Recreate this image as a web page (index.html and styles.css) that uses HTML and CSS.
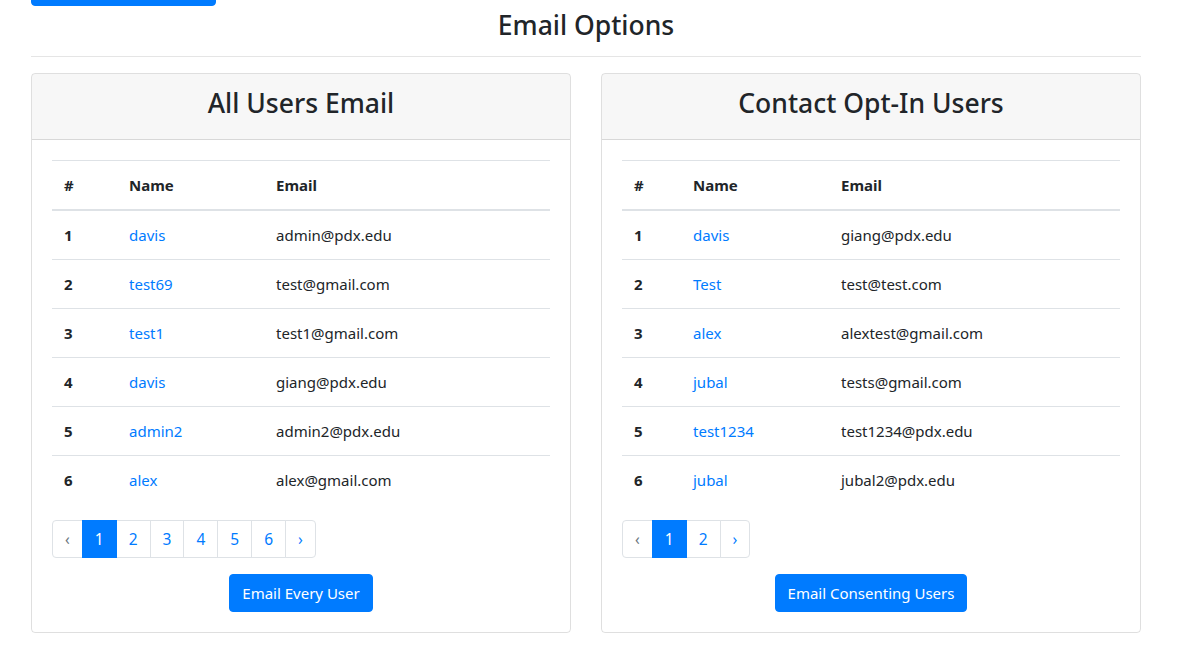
FILE: index.html
```html
<!DOCTYPE html>
<html>
<head>
<meta charset="utf-8">
<link rel="stylesheet" href="styles.css">
</head>
<body>
<div class="page">
  <div class="top-row"><button class="btn btn-top" aria-label="Back"></button></div>
  <h3 class="page-title">Email Options</h3>
  <hr class="divider">
  <div class="cards">
    <div class="card">
      <div class="card-header"><h3 class="card-title">All Users Email</h3></div>
      <div class="card-body">
        <table class="table t-left">
          <colgroup><col class="c1"><col class="c2"><col></colgroup>
          <thead><tr><th>#</th><th>Name</th><th>Email</th></tr></thead>
          <tbody>
            <tr><th>1</th><td><a href="#">davis</a></td><td>admin@pdx.edu</td></tr>
            <tr><th>2</th><td><a href="#">test69</a></td><td>test@gmail.com</td></tr>
            <tr><th>3</th><td><a href="#">test1</a></td><td>test1@gmail.com</td></tr>
            <tr><th>4</th><td><a href="#">davis</a></td><td>giang@pdx.edu</td></tr>
            <tr><th>5</th><td><a href="#">admin2</a></td><td>admin2@pdx.edu</td></tr>
            <tr><th>6</th><td><a href="#">alex</a></td><td>alex@gmail.com</td></tr>
          </tbody>
        </table>
        <ul class="pagination">
          <li class="page-item disabled"><span class="page-link arrow">‹</span></li>
          <li class="page-item active"><span class="page-link">1</span></li>
          <li class="page-item"><a class="page-link" href="#">2</a></li>
          <li class="page-item"><a class="page-link" href="#">3</a></li>
          <li class="page-item"><a class="page-link" href="#">4</a></li>
          <li class="page-item"><a class="page-link" href="#">5</a></li>
          <li class="page-item"><a class="page-link" href="#">6</a></li>
          <li class="page-item"><a class="page-link arrow" href="#">›</a></li>
        </ul>
        <div class="actions"><button class="btn">Email Every User</button></div>
      </div>
    </div>
    <div class="card">
      <div class="card-header"><h3 class="card-title">Contact Opt-In Users</h3></div>
      <div class="card-body">
        <table class="table t-right">
          <colgroup><col class="c1"><col class="c2"><col></colgroup>
          <thead><tr><th>#</th><th>Name</th><th>Email</th></tr></thead>
          <tbody>
            <tr><th>1</th><td><a href="#">davis</a></td><td>giang@pdx.edu</td></tr>
            <tr><th>2</th><td><a href="#">Test</a></td><td>test@test.com</td></tr>
            <tr><th>3</th><td><a href="#">alex</a></td><td>alextest@gmail.com</td></tr>
            <tr><th>4</th><td><a href="#">jubal</a></td><td>tests@gmail.com</td></tr>
            <tr><th>5</th><td><a href="#">test1234</a></td><td>test1234@pdx.edu</td></tr>
            <tr><th>6</th><td><a href="#">jubal</a></td><td>jubal2@pdx.edu</td></tr>
          </tbody>
        </table>
        <ul class="pagination">
          <li class="page-item disabled"><span class="page-link arrow">‹</span></li>
          <li class="page-item active"><span class="page-link">1</span></li>
          <li class="page-item"><a class="page-link" href="#">2</a></li>
          <li class="page-item"><a class="page-link arrow" href="#">›</a></li>
        </ul>
        <div class="actions"><button class="btn">Email Consenting Users</button></div>
      </div>
    </div>
  </div>
</div>
</body>
</html>
```
FILE: styles.css
```css
* { box-sizing: border-box; }
html, body { margin: 0; padding: 0; background: #fff; }
body {
  font-family: "Noto Sans", "Open Sans", sans-serif;
  font-size: 15px;
  line-height: 24px;
  color: #212529;
}
.page {
  width: 1110px;
  margin-left: 31px;
}
.top-row { height: 6px; overflow: hidden; }
.btn {
  display: inline-block;
  font-family: inherit;
  font-size: 15px;
  line-height: 24px;
  color: #fff;
  background: #007bff;
  border: 1px solid #007bff;
  border-radius: 4px;
  padding: 6px 12px;
  cursor: pointer;
}
.btn-top {
  display: block;
  width: 185px;
  height: 38px;
  margin-top: -32px;
}
.page-title {
  margin: 3px 0 0;
  font-size: 26.5px;
  font-weight: 500;
  line-height: 33.6px;
  text-align: center;
}
.divider {
  margin: 13px 0 16px;
  border: 0;
  border-top: 1px solid rgba(0,0,0,.1);
}
.cards {
  display: grid;
  grid-template-columns: 540px 540px;
  column-gap: 30px;
}
.card {
  border: 1px solid rgba(0,0,0,.125);
  border-radius: 4px;
  overflow: hidden;
}
.card-header {
  background: rgba(0,0,0,.03);
  border-bottom: 1px solid rgba(0,0,0,.125);
  padding: 13px 20px 11px;
  text-align: center;
}
.card-title {
  margin: 0 0 8px;
  font-size: 26.5px;
  font-weight: 500;
  line-height: 33.6px;
}
.card-body { padding: 20px; }
.table {
  width: 100%;
  table-layout: fixed;
  border-collapse: collapse;
  margin-bottom: 16px;
}
.table th, .table td {
  padding: 12px;
  text-align: left;
  vertical-align: top;
  border-top: 1px solid #dee2e6;
}
.table th { font-weight: 700; }
.table thead th { border-bottom: 2px solid #dee2e6; }
.t-left .c1 { width: 65px; }
.t-left .c2 { width: 147px; }
.t-right .c1 { width: 59px; }
.t-right .c2 { width: 148px; }
a { color: #007bff; text-decoration: none; }
.pagination {
  display: flex;
  list-style: none;
  margin: 0 0 16px;
  padding: 0;
}
.page-link {
  display: block;
  padding: 8px 12px;
  font-size: 15.5px;
  line-height: 20px;
  color: #007bff;
  background: #fff;
  border: 1px solid #dee2e6;
  margin-left: -1px;
}
.page-item:first-child .page-link {
  margin-left: 0;
  border-radius: 4px 0 0 4px;
}
.page-item:last-child .page-link { border-radius: 0 4px 4px 0; }
.page-item.disabled .page-link { color: #6c757d; }
.page-item.active .page-link {
  color: #fff;
  background: #007bff;
  border-color: #007bff;
  position: relative;
}
.actions { text-align: center; }
```
